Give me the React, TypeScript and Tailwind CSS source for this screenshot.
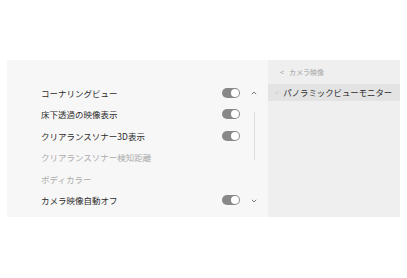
import React from "react";

const font = { fontFamily: '"Noto Sans CJK JP", "Noto Sans", sans-serif' };

type Row = { label: string; toggle: boolean; disabled?: boolean };

const rows: Row[] = [
  { label: "コーナリングビュー", toggle: true },
  { label: "床下透過の映像表示", toggle: true },
  { label: "クリアランスソナー3D表示", toggle: true },
  { label: "クリアランスソナー検知距離", toggle: false, disabled: true },
  { label: "ボディカラー", toggle: false, disabled: true },
  { label: "カメラ映像自動オフ", toggle: true },
];

function Toggle() {
  return (
    <div className="w-[18px] h-[10px] rounded-full bg-[#888888] flex items-center justify-end pr-[1px]">
      <div className="w-[8px] h-[8px] rounded-full bg-white" />
    </div>
  );
}

function Chevron({ up }: { up?: boolean }) {
  return (
    <svg width="6" height="4" viewBox="0 0 6 4" fill="none">
      <polyline
        points={up ? "0.8,3.2 3,1 5.2,3.2" : "0.8,0.8 3,3 5.2,0.8"}
        stroke="#6a6a6a"
        strokeWidth="0.9"
      />
    </svg>
  );
}

export default function App() {
  return (
    <div className="w-[407px] h-[278px] bg-white pt-[60px] pl-[7px]" style={font}>
      <div className="flex h-[157px]">
        <div className="w-[261px] bg-[#f7f7f7] flex pt-[22px]">
          <div className="w-[233px] pl-[34px] flex flex-col">
            {rows.map((r) => (
              <div key={r.label} className="h-[21.5px] flex items-center">
                <span
                  className={`flex-1 text-[8.5px] leading-none ${
                    r.disabled ? "text-[#ababab]" : "text-[#2b2b2b]"
                  }`}
                >
                  {r.label}
                </span>
                {r.toggle && <Toggle />}
              </div>
            ))}
          </div>
          <div className="w-[10px] ml-[9px] flex flex-col items-center">
            <div className="h-[21.5px] flex items-center">
              <Chevron up />
            </div>
            <div className="mt-[8px] w-px h-[48px] bg-[#e0e0e0]" />
            <div className="mt-[31px] h-[21.5px] flex items-center">
              <Chevron />
            </div>
          </div>
        </div>
        <div className="w-[132px] bg-[#efefef] flex flex-col">
          <div className="h-[24px] flex items-center pl-[12px] gap-[5px] text-[#a0a0a0]">
            <span className="text-[7px] leading-none">&lt;</span>
            <span className="text-[7px] leading-none">カメラ映像</span>
          </div>
          <div className="h-[17px] bg-[#e3e3e3] flex items-center pl-[7px] gap-[5px]">
            <span className="text-[6px] leading-none text-[#c4c4c4]">&lt;</span>
            <span className="text-[8.4px] leading-none text-[#2b2b2b]">パノラミックビューモニター</span>
          </div>
        </div>
      </div>
    </div>
  );
}
